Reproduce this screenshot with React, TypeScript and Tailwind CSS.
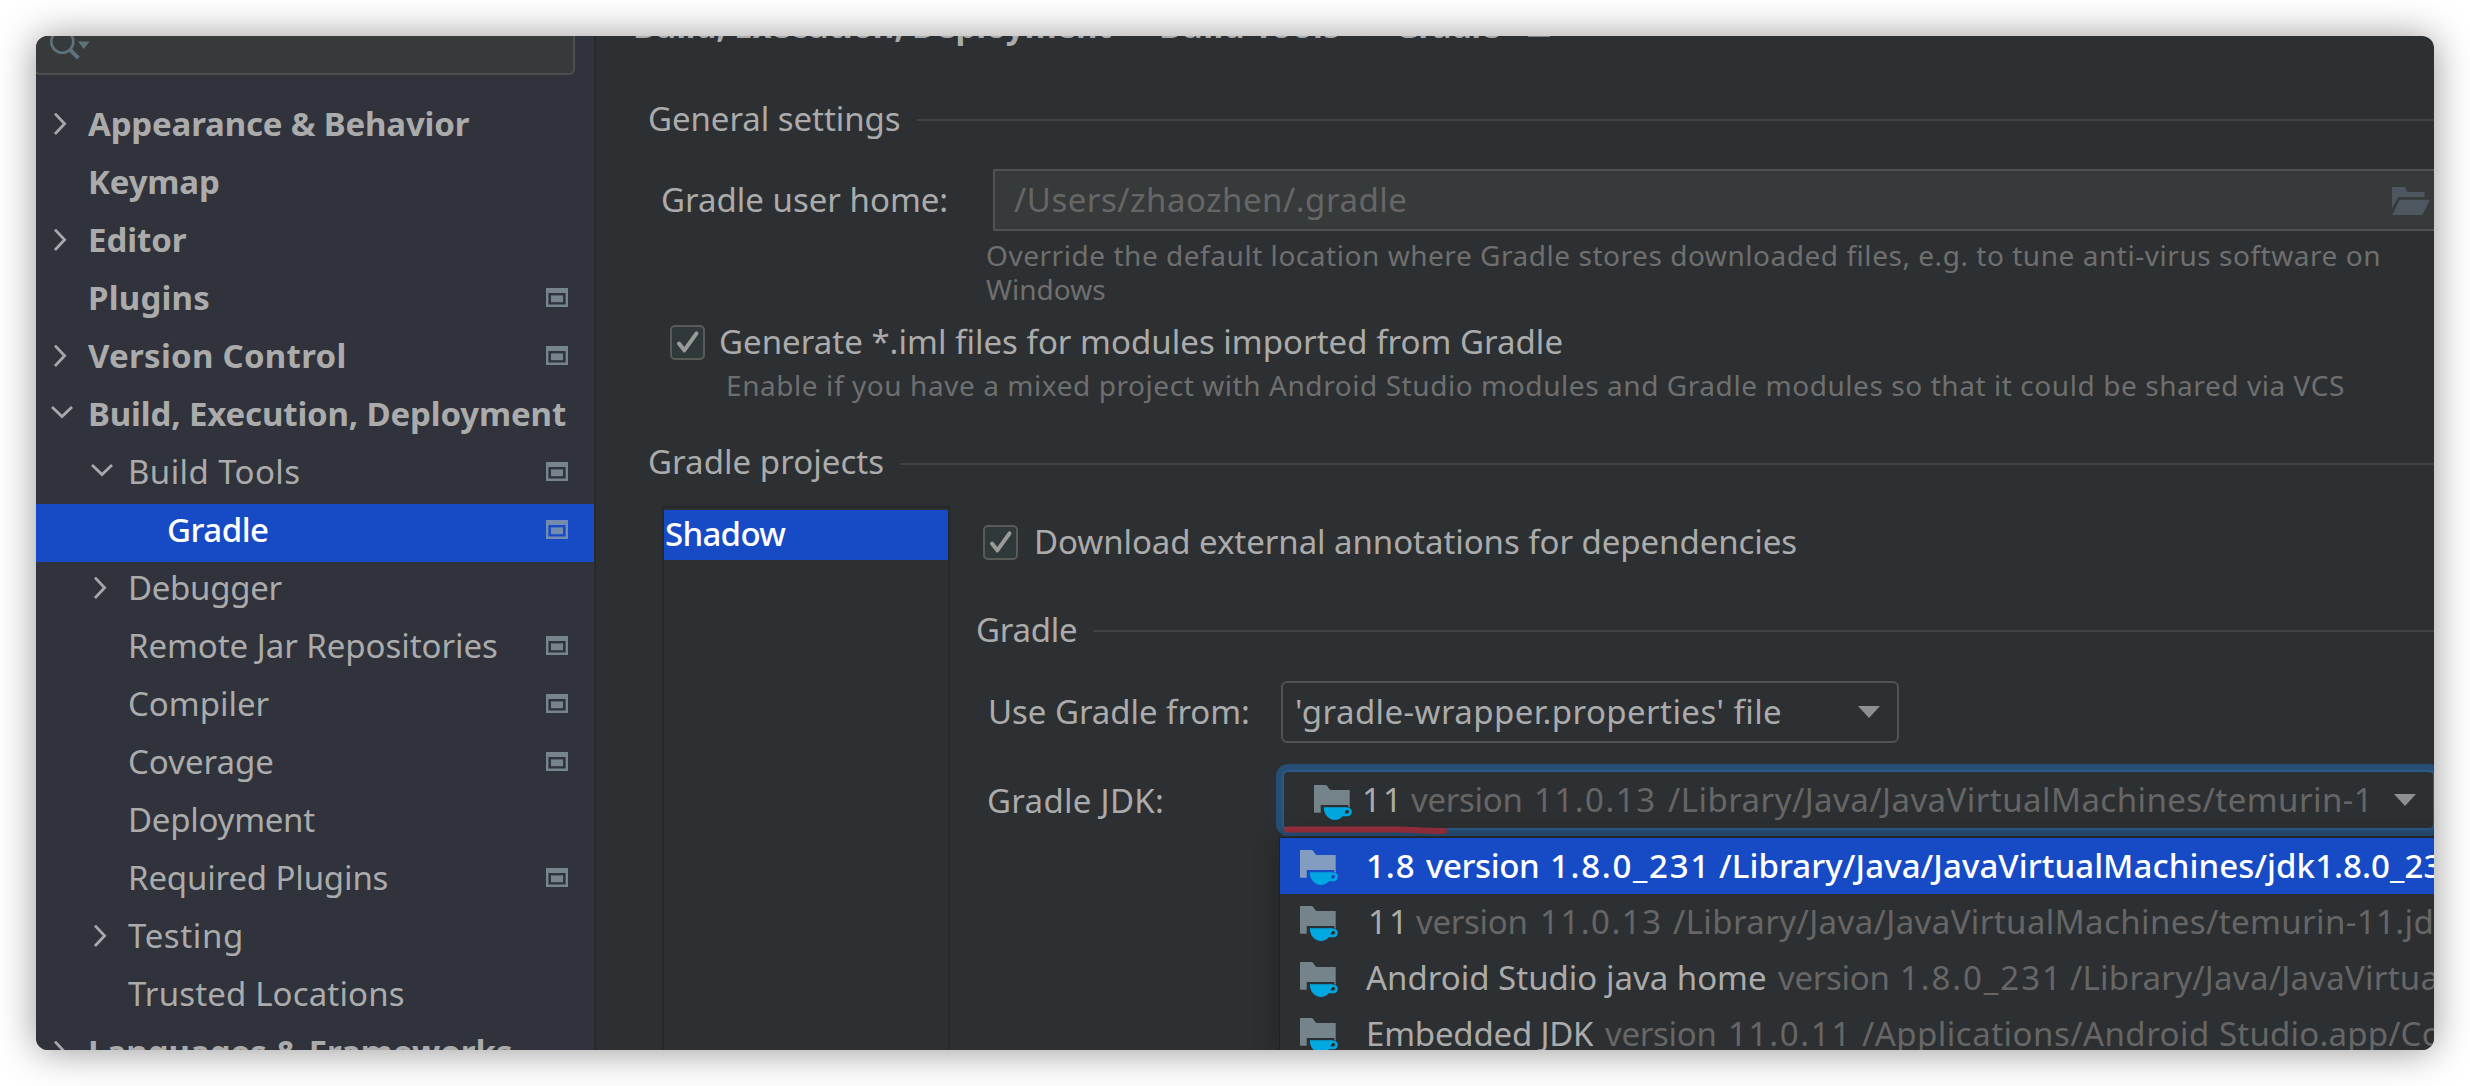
import React from "react";

type Row = {
  label: string;
  indent: string;
  track: string;
  chevron?: "right" | "down";
  bold?: boolean;
  project?: boolean;
  selected?: boolean;
};

const L0 = "pl-[14px]";
const L1 = "pl-[54px]";
const L2 = "pl-[93px]";

const rows: Row[] = [
  { label: "Appearance & Behavior", indent: L0, track: "tracking-[-0.17px]", chevron: "right", bold: true },
  { label: "Keymap", indent: L0, track: "tracking-[-0.15px]", bold: true },
  { label: "Editor", indent: L0, track: "tracking-[-0.1px]", chevron: "right", bold: true },
  { label: "Plugins", indent: L0, track: "tracking-[0.2px]", bold: true, project: true },
  { label: "Version Control", indent: L0, track: "tracking-[0.27px]", chevron: "right", bold: true, project: true },
  { label: "Build, Execution, Deployment", indent: L0, track: "tracking-[-0.15px]", chevron: "down", bold: true },
  { label: "Build Tools", indent: L1, track: "tracking-[0.4px]", chevron: "down", project: true },
  { label: "Gradle", indent: L2, track: "tracking-[-0.5px]", project: true, selected: true },
  { label: "Debugger", indent: L1, track: "tracking-[-0.3px]", chevron: "right" },
  { label: "Remote Jar Repositories", indent: L1, track: "tracking-[-0.05px]", project: true },
  { label: "Compiler", indent: L1, track: "tracking-normal", project: true },
  { label: "Coverage", indent: L1, track: "tracking-normal", project: true },
  { label: "Deployment", indent: L1, track: "tracking-[-0.25px]" },
  { label: "Required Plugins", indent: L1, track: "tracking-[-0.15px]", project: true },
  { label: "Testing", indent: L1, track: "tracking-[0.6px]", chevron: "right" },
  { label: "Trusted Locations", indent: L1, track: "tracking-[0.15px]" },
  { label: "Languages & Frameworks", indent: L0, track: "tracking-normal", chevron: "right", bold: true },
];

function Chevron({ dir }: { dir?: "right" | "down" }) {
  return (
    <svg width="38" height="24" viewBox="0 0 38 24" fill="none" stroke="#a6a8ab" strokeWidth="2.8" className="shrink-0">
      {dir === "right" && <path d="M5 2.6 14.6 12.8 5 23" />}
      {dir === "down" && <path d="M2 6 12 15.6 22 6" />}
    </svg>
  );
}

function ProjectIcon({ color = "#75848d" }: { color?: string }) {
  return (
    <svg width="22" height="19" viewBox="0 0 22 19" className="shrink-0" fill={color}>
      <path fillRule="evenodd" d="M0 0H22V19H0ZM2.4 5V16.6H19.6V5Z" />
      <rect x="5" y="7.4" width="12" height="6.8" />
    </svg>
  );
}

function JdkIcon({ folder = "#75838b", gap = "" }: { folder?: string; gap?: string }) {
  return (
    <svg width="38" height="35" viewBox="0 0 38 35" className={`shrink-0 ${gap}`}>
      <path d="M0 0H11.5C13.8 0 14.6 5 17.3 5H35.7V22.4H34.4V20H6.7V27.7H0Z" fill={folder} />
      <path d="M9.8 22.3H32C32 29.6 27.2 35 20.9 35S9.8 29.6 9.8 22.3Z" fill="#00a8e1" />
      <path d="M30.5 23.7H33.4A3 3 0 0 1 33.4 29.9H29" fill="none" stroke="#00a8e1" strokeWidth="2.6" />
    </svg>
  );
}

function Checkbox() {
  return (
    <svg width="35" height="35" viewBox="0 0 35 35" className="shrink-0" fill="none">
      <rect x="1" y="1" width="33" height="33" rx="4" fill="#2f383b" stroke="#5a5a59" strokeWidth="2" />
      <path d="M9 18.5 14.3 25.3 26.5 8.3" stroke="#9a9a99" strokeWidth="4" strokeLinecap="round" strokeLinejoin="round" />
    </svg>
  );
}

function Triangle() {
  return (
    <svg width="22" height="12" viewBox="0 0 22 12" className="shrink-0">
      <path d="M0 0H22L11 12Z" fill="#8c9093" />
    </svg>
  );
}

function Title({ text, track, pad }: { text: string; track: string; pad: string }) {
  return (
    <div className={`flex h-11 items-center ${pad}`}>
      <span className={track}>{text}</span>
      <div className="relative top-[1.5px] ml-[16px] h-[2px] flex-1 bg-[#424242]" />
    </div>
  );
}

type Segment = { text: string; cls: string };

const options: { selected?: boolean; parts: Segment[] }[] = [
  {
    selected: true,
    parts: [
      { text: "1.8", cls: "w-[60px] tracking-[0.9px]" },
      { text: "version", cls: "w-[123px] tracking-[-0.4px]" },
      { text: "1.8.0_231", cls: "w-[170px] tracking-[1.7px] pl-[1px]" },
      { text: "/Library/Java/JavaVirtualMachines/jdk1.8.0_231.jdk", cls: "tracking-[0.07px]" },
    ],
  },
  {
    parts: [
      { text: "11", cls: "w-[50px] tracking-[2px] pl-[2px]" },
      { text: "version", cls: "w-[124px] tracking-[-0.3px] text-[#666666]" },
      { text: "11.0.13", cls: "w-[133px] tracking-[1.5px] text-[#666666]" },
      { text: "/Library/Java/JavaVirtualMachines/temurin-11.jdk", cls: "tracking-[0.4px] text-[#666666]" },
    ],
  },
  {
    parts: [
      { text: "Android Studio java home", cls: "w-[412px]" },
      { text: "version", cls: "w-[122px] tracking-[-0.3px] text-[#666666]" },
      { text: "1.8.0_231", cls: "w-[170px] tracking-[1.9px] text-[#666666]" },
      { text: "/Library/Java/JavaVirtualMachines", cls: "tracking-[0.25px] text-[#666666]" },
    ],
  },
  {
    parts: [
      { text: "Embedded JDK", cls: "w-[239px] tracking-[-0.2px]" },
      { text: "version", cls: "w-[123px] tracking-[-0.3px] text-[#666666]" },
      { text: "11.0.11", cls: "w-[134px] tracking-[1.7px] text-[#666666]" },
      { text: "/Applications/Android", cls: "w-[357px] tracking-[0.48px] text-[#666666]" },
      { text: "Studio.app/Contents", cls: "tracking-[0.2px] text-[#666666]" },
    ],
  },
];

function Sidebar() {
  return (
    <aside className="flex w-[560px] shrink-0 flex-col border-r-2 border-[#28292b] bg-[#30333c]">
      <div className="-ml-[2px] h-[39px] w-[541px] shrink-0 rounded-b-[6px] border-2 border-t-0 border-[#4e4e4e] bg-[#363a3a]">
        <svg width="60" height="30" viewBox="0 0 60 30" fill="none" className="block">
          <circle cx="26.3" cy="5.7" r="11" stroke="#5f727c" strokeWidth="2.6" />
          <path d="M33.8 13.6 42.4 22.2" stroke="#5f727c" strokeWidth="4" />
          <path d="M42 5.6H53.6L47.8 13Z" fill="#5f727c" />
        </svg>
      </div>
      <div className="mt-[23px]">
        {rows.map((r) => (
          <div
            key={r.label}
            className={`flex h-[58px] items-center pr-[26px] pb-2 ${r.indent} ${r.selected ? "bg-[#174bc6] font-medium text-white" : ""}`}
          >
            <Chevron dir={r.chevron} />
            <span className={`flex-1 pt-[2px] ${r.track} ${r.bold ? "font-bold" : ""}`}>{r.label}</span>
            {r.project && <ProjectIcon color={r.selected ? "#748bb0" : "#75848d"} />}
          </div>
        ))}
      </div>
    </aside>
  );
}

function JdkPopup() {
  return (
    <div className="absolute top-[73px] left-[3px] w-[1200px] border-t border-l border-[#1f2123] bg-[#2d3032] shadow-[0_0_24px_rgba(0,0,0,0.25)]">
      {options.map((o, i) => (
        <div
          key={i}
          className={`flex h-14 items-center pl-[20px] ${o.selected ? "bg-[#174bc6] font-medium text-white" : ""}`}
        >
          <JdkIcon folder={o.selected ? "#829dc0" : "#75838b"} gap="mt-[3px]" />
          <div className="flex pl-[28px]">
            {o.parts.map((p) => (
              <span key={p.text} className={`shrink-0 ${p.cls}`}>
                {p.text}
              </span>
            ))}
          </div>
        </div>
      ))}
    </div>
  );
}

export default function App() {
  return (
    <div className="h-[1086px] w-[2470px] overflow-hidden bg-white p-9 font-['Noto_Sans',sans-serif] text-[33px] leading-[44px] whitespace-pre text-[#ababab]">
      <div className="h-[1014px] w-[2398px] rounded-[12px] shadow-[0_1px_38px_rgba(0,0,0,0.42)]">
        <div className="flex h-full overflow-hidden rounded-[12px] bg-[#2d3032]">
          <Sidebar />
          <main className="flex min-w-0 flex-1 flex-col">
            <div className="-mt-[32px] flex h-11 shrink-0 items-center pl-[37px] font-bold">
              <span className="w-[490px] tracking-[-0.13px]">Build, Execution, Deployment</span>
              <span className="w-[36px] font-normal">›</span>
              <span className="w-[200px] tracking-[0.4px]">Build Tools</span>
              <span className="w-[36px] font-normal">›</span>
              <span className="w-[133px] tracking-[-0.6px]">Gradle</span>
              <div className="pt-[2px]">
                <ProjectIcon />
              </div>
            </div>

            <div className="mt-12">
              <Title text="General settings" track="tracking-[-0.06px] pt-[2px]" pad="pl-[52px]" />
            </div>

            <div className="mt-[29px] flex h-[62px] shrink-0">
              <span className="w-[397px] shrink-0 pt-[9px] pl-[65px]">Gradle user home:</span>
              <div className="-mr-[6px] flex flex-1 items-center justify-between border-2 border-[#525252] bg-[#363a3a] pr-[8px] pl-[19px] text-[#666666]">
                <span className="tracking-[0.5px]">/Users/zhaozhen/.gradle</span>
                <svg width="38" height="28" viewBox="0 0 38 28" fill="#4e575f" className="mt-[2px]">
                  <path d="M0 0H13L15.5 5H32.5V10H6.5L0 21Z" />
                  <path d="M7.5 12.8H38L30.5 28H.4Z" />
                </svg>
              </div>
            </div>
            <div className="mt-[7px] pl-[390px] text-[28px] leading-[34px] text-[#6f6f6f]">
              <div className="tracking-[0.54px]">
                Override the default location where Gradle stores downloaded files, e.g. to tune anti-virus software on
              </div>
              <div>Windows</div>
            </div>

            <div className="mt-[14px] flex h-11 items-center pl-[74px]">
              <Checkbox />
              <span className="-mt-[1px] pl-[14px] tracking-[0.02px]">
                Generate *.iml files for modules imported from Gradle
              </span>
            </div>
            <div className="mt-1 pl-[130px] text-[28px] leading-[34px] tracking-[0.57px] text-[#6f6f6f]">
              Enable if you have a mixed project with Android Studio modules and Gradle modules so that it could be shared via
              VCS
            </div>

            <div className="mt-[38px]">
              <Title text="Gradle projects" track="tracking-[0.05px]" pad="pl-[52px]" />
            </div>

            <div className="mt-[22px] flex flex-1">
              <div className="ml-[66px] w-[288px] shrink-0 border-2 border-b-0 border-[#262829] pt-[2px]">
                <div className="h-[50px] bg-[#174bc6] pt-[2px] pl-[1px] font-medium tracking-[-0.7px] text-white">Shadow</div>
              </div>
              <div className="min-w-0 flex-1 pt-[14px]">
                <div className="flex h-11 items-center pl-[33px]">
                  <Checkbox />
                  <span className="-mt-[1px] pl-[16px] tracking-[-0.06px]">
                    Download external annotations for dependencies
                  </span>
                </div>
                <div className="mt-[43px]">
                  <Title text="Gradle" track="tracking-[-0.25px] pt-[2px]" pad="pl-[26px]" />
                </div>
                <div className="mt-[30px] flex h-[62px] items-center">
                  <span className="w-[331px] shrink-0 pl-[38px] tracking-[-0.05px]">Use Gradle from:</span>
                  <div className="flex h-[62px] w-[618px] items-center justify-between rounded-[6px] border-2 border-[#525252] pr-[17px] pl-[12px]">
                    <span className="tracking-[0.42px]">'gradle-wrapper.properties' file</span>
                    <Triangle />
                  </div>
                </div>
                <div className="mt-[21px] flex h-[72px] items-center">
                  <span className="w-[326px] shrink-0 pt-[1px] pl-[37px] tracking-[0.3px]">Gradle JDK:</span>
                  <div className="relative h-[72px] w-[1165px] shrink-0 rounded-[12px] bg-[#274f76] p-[6px]">
                    <div className="flex h-[60px] items-center rounded-[6px] border-2 border-[#2b5a8a] bg-[#2d3032] pl-[30px]">
                      <JdkIcon gap="mt-[5px]" />
                      <div className="flex w-[1024px] shrink-0 overflow-hidden pl-[10px] text-[#666666]">
                        <span className="w-[49px] shrink-0 tracking-[2px] text-[#ababab]">11</span>
                        <span className="w-[123px] shrink-0 tracking-[-0.3px]">version</span>
                        <span className="w-[134px] shrink-0 tracking-[1.5px]">11.0.13</span>
                        <span className="tracking-[0.45px]">/Library/Java/JavaVirtualMachines/temurin-11</span>
                      </div>
                      <div className="ml-[18px]">
                        <Triangle />
                      </div>
                    </div>
                    <svg width="180" height="12" viewBox="0 0 180 12" fill="none" className="absolute top-[60px] left-[4px]">
                      <path d="M7 5.5H118C130 5.5 140 7 164 7" stroke="#9a2f3d" strokeWidth="6" strokeLinecap="round" />
                    </svg>
                    <JdkPopup />
                  </div>
                </div>
              </div>
            </div>
          </main>
        </div>
      </div>
    </div>
  );
}
